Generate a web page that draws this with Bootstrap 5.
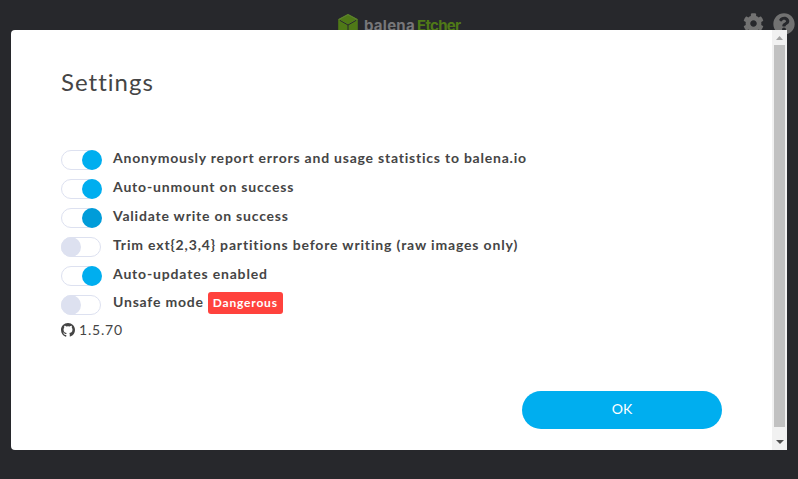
<!DOCTYPE html>
<html lang="en">
<head>
<meta charset="utf-8">
<title>balenaEtcher</title>
<link href="https://cdn.jsdelivr.net/npm/bootstrap@5.3.0/dist/css/bootstrap.min.css" rel="stylesheet">
<style>
body{width:798px;height:479px;background:#27282c;color:#454545;font-family:Lato,"Open Sans",sans-serif;font-size:14px;line-height:20px}
.brand-row{height:30px;padding:13px 3px 0 338px}
.brand-name{font:700 15px/20px Inter,sans-serif;color:#77777a;margin:3px 0 0 6px;white-space:nowrap}
.brand-name .balena{width:53px;letter-spacing:.25px}
.brand-name .etcher{color:#4f7917;letter-spacing:-.7px}
.app-icons{color:#727272;gap:9px}
.dialog-box{width:776px;height:420px;margin-left:11px;border-radius:4px 0 0 4px;background:#fff}
.dialog-main{padding:37px 50px 21px}
.dialog-title{font-size:24px;line-height:30px;font-weight:400;letter-spacing:1px;height:83px}
.setting{height:29px;gap:11px}
.toggle{width:41px;height:20px}
.track{width:40px;height:20px;border:1px solid #dde1f0;border-radius:10px}
.knob{width:20px;height:20px;border-radius:50%;background:#dde1f0;margin:-1px}
.on .knob{background:#00aeef;margin-left:20px;flex:none}
.on.hov .knob{background:#009cd9}
.setting-text{font-weight:700;line-height:20px;height:20px;margin-top:-2px;white-space:nowrap}
.l1{letter-spacing:.78px}
.l2{letter-spacing:.83px}
.l3{letter-spacing:.79px}
.l4{letter-spacing:.84px}
.l5{letter-spacing:.83px}
.l6{letter-spacing:.79px}
.l6row{margin-top:-2px}
.l6row .l6{margin-top:-3px}
.danger-tag{background:#ff423d;color:#fff;border-radius:3px;width:75px;height:22px;line-height:22px;font-size:12px;letter-spacing:.8px;margin-left:4px;flex:none}
.version{height:20px;gap:4px;margin-top:-4px;letter-spacing:.8px}
.ok-btn{width:200px;height:38px;border-radius:19px;background:#00aeef;color:#fff;font-size:14px;line-height:20px;padding:0 0 2px;border:0}
.scroll-bar{width:15px;background:#f1f1f1;padding:6px 2px 6px}
.scroll-thumb{width:11px;height:382px;background:#c1c1c1;margin-top:5px}
svg{display:block;flex:none}
</style>
<script src="https://cdn.jsdelivr.net/npm/bootstrap@5.3.0/dist/js/bootstrap.bundle.min.js"></script>
</head>
<body class="overflow-hidden">
<header class="brand-row d-flex align-items-start">
  <svg width="20" height="22" viewBox="0 0 20 22"><path d="M10 1l9.800 5.300v11L10 22 .2 17.300v-11z" fill="#4f7917"/><path d="M10 1l9.800 5.300L10 12 .2 6.300z" fill="#5d8230"/><path d="M10 2.200l8 4.400-8 4.600-8-4.600z" fill="#4f7917"/><path d="M1.800 7.300L10 12l8.200-4.700M10 12v9" stroke="#27282c" stroke-width="1" fill="none"/></svg>
  <div class="brand-name d-flex"><span class="balena">balena</span><span class="etcher">Etcher</span></div>
  <div class="app-icons d-flex ms-auto">
    <svg width="21" height="21" viewBox="0 0 512 512" fill="currentColor"><path d="M487.400 315.700l-42.600-24.600c4.300-23.200 4.300-47 0-70.200l42.600-24.600c4.900-2.800 7.100-8.600 5.500-14-11.100-35.600-30-67.800-54.700-94.600-3.800-4.100-10-5.100-14.800-2.300L380.800 110c-17.900-15.400-38.500-27.300-60.800-35.100V25.800c0-5.600-3.900-10.500-9.400-11.700-36.700-8.200-74.300-7.800-109.200 0-5.500 1.200-9.400 6.100-9.400 11.700V75c-22.200 7.900-42.800 19.800-60.800 35.100L88.700 85.500c-4.900-2.800-11-1.900-14.800 2.300-24.700 26.700-43.600 58.900-54.700 94.600-1.700 5.400.6 11.200 5.500 14L67.300 221c-4.300 23.200-4.300 47 0 70.200l-42.600 24.600c-4.900 2.800-7.100 8.600-5.500 14 11.100 35.600 30 67.800 54.700 94.600 3.800 4.100 10 5.100 14.800 2.300l42.600-24.600c17.900 15.400 38.500 27.300 60.800 35.100v49.200c0 5.600 3.900 10.500 9.400 11.700 36.700 8.200 74.300 7.800 109.200 0 5.500-1.200 9.400-6.100 9.400-11.700v-49.200c22.200-7.900 42.800-19.800 60.800-35.100l42.600 24.600c4.900 2.800 11 1.900 14.800-2.300 24.700-26.700 43.600-58.900 54.700-94.600 1.500-5.500-.7-11.300-5.600-14.100zM256 336c-44.100 0-80-35.900-80-80s35.900-80 80-80 80 35.900 80 80-35.900 80-80 80z"/></svg>
    <svg width="22" height="22" viewBox="0 0 512 512" fill="currentColor"><path d="M504 256c0 137-111 248-248 248S8 393 8 256C8 119.100 119 8 256 8s248 111.100 248 248zM262.700 90c-54.500 0-89.300 23-116.500 63.800-3.500 5.300-2.400 12.400 2.700 16.300l34.700 26.300c5.200 3.900 12.600 3 16.700-2.100 17.900-22.700 30.100-35.800 57.300-35.800 20.400 0 45.700 13.100 45.700 33 0 15-12.400 22.700-32.500 34C247.100 238.500 216 254.900 216 296v4c0 6.600 5.400 12 12 12h56c6.600 0 12-5.400 12-12v-1.300c0-28.500 83.200-29.600 83.200-106.700 0-58-60.200-102-116.500-102zM256 338c-25.400 0-46 20.600-46 46s20.600 46 46 46 46-20.600 46-46-20.600-46-46-46z"/></svg>
  </div>
</header>
<main class="dialog-box d-flex position-relative">
  <div class="dialog-main flex-grow-1 d-flex flex-column">
    <h1 class="dialog-title mb-0"><span>Settings</span></h1>
    <div class="setting on d-flex"><div class="toggle"><div class="track d-flex"><div class="knob"></div></div></div><div class="setting-text"><span class="l1">Anonymously report errors and usage statistics to balena.io</span></div></div>
    <div class="setting on d-flex"><div class="toggle"><div class="track d-flex"><div class="knob"></div></div></div><div class="setting-text"><span class="l2">Auto-unmount on success</span></div></div>
    <div class="setting on hov d-flex"><div class="toggle"><div class="track d-flex"><div class="knob"></div></div></div><div class="setting-text"><span class="l3">Validate write on success</span></div></div>
    <div class="setting d-flex"><div class="toggle"><div class="track d-flex"><div class="knob"></div></div></div><div class="setting-text"><span class="l4">Trim ext{2,3,4} partitions before writing (raw images only)</span></div></div>
    <div class="setting on d-flex"><div class="toggle"><div class="track d-flex"><div class="knob"></div></div></div><div class="setting-text"><span class="l5">Auto-updates enabled</span></div></div>
    <div class="setting d-flex"><div class="toggle"><div class="track d-flex"><div class="knob"></div></div></div><div class="setting-text d-flex align-items-center l6row"><span class="l6">Unsafe mode</span><span class="danger-tag text-center">Dangerous</span></div></div>
    <div class="version d-flex align-items-center"><svg width="14" height="14" viewBox="0 0 16 16" fill="currentColor"><path d="M8 0C3.580 0 0 3.580 0 8c0 3.540 2.290 6.530 5.470 7.590.4.070.55-.17.55-.38v-1.490C3.800 14.200 3.330 12.650 3.330 12.650c-.36-.92-.89-1.170-.89-1.170-.73-.5.050-.49.050-.49.800.06 1.230.83 1.230.83.720 1.220 1.870.87 2.330.66.070-.52.280-.87.510-1.070-1.780-.2-3.640-.89-3.640-3.950 0-.87.310-1.590.82-2.150-.08-.2-.36-1.020.08-2.120 0 0 .67-.21 2.200.82a7.700 7.700 0 0 1 4 0c1.530-1.040 2.200-.82 2.200-.82.440 1.100.160 1.920.080 2.120.510.56.820 1.270.820 2.150 0 3.070-1.870 3.750-3.650 3.950.290.25.540.73.540 1.480v2.200c0 .21.150.46.550.38A8 8 0 0 0 16 8c0-4.420-3.580-8-8-8z"/></svg><span>1.5.70</span></div>
    <button type="button" class="btn ok-btn mt-auto ms-auto">OK</button>
  </div>
  <div class="scroll-bar d-flex flex-column align-items-center">
    <svg width="7" height="4" viewBox="0 0 7 4"><path d="M3.500 0L7 4H0z" fill="#a3a3a3"/></svg>
    <div class="scroll-thumb"></div>
    <svg class="mt-auto" width="8" height="4" viewBox="0 0 8 4"><path d="M0 0h8L4 4z" fill="#505050"/></svg>
  </div>
</main>
</body>
</html>
